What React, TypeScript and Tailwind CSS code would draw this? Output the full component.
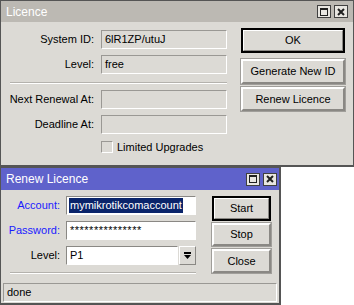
import React from 'react';

const font = { fontFamily: '"Liberation Sans", Arial, sans-serif' };

function TitleButtons() {
  return (
    <div className="flex gap-[3px]">
      <div className="w-[14px] h-[13px] border border-[#404040] bg-[#e8e6e1] flex items-center justify-center">
        <div className="w-[8px] h-[8px] border border-[#202020] border-t-2" />
      </div>
      <div className="w-[14px] h-[13px] border border-[#404040] bg-[#e8e6e1] flex items-center justify-center">
        <svg width="8" height="8" viewBox="0 0 8 8">
          <path d="M1 1L7 7M7 1L1 7" stroke="#202020" strokeWidth="2" />
        </svg>
      </div>
    </div>
  );
}

function Btn({ children, primary, className = '' }: { children: React.ReactNode; primary?: boolean; className?: string }) {
  return (
    <div
      className={`flex items-center justify-center text-black ${
        primary ? 'border-2 border-black' : 'border-2 border-t-white border-l-white border-r-[#8a8884] border-b-[#8a8884] outline outline-1 outline-[#a09e9a]'
      } ${className}`}
    >
      {primary ? (
        <div className="w-full h-full flex items-center justify-center border border-t-white border-l-white border-r-[#8a8884] border-b-[#8a8884]">
          {children}
        </div>
      ) : (
        children
      )}
    </div>
  );
}

function ReadField({ value }: { value?: string }) {
  return (
    <div className="w-[126px] h-[19px] border border-t-[#9a9894] border-l-[#9a9894] border-b-white border-r-white px-[3px] flex items-center text-black">
      {value}
    </div>
  );
}

function Row({ label, children }: { label: string; children: React.ReactNode }) {
  return (
    <div className="flex items-center">
      <div className="w-[100px] text-right pr-[7px] text-black">{label}</div>
      {children}
    </div>
  );
}

export default function App() {
  return (
    <div className="w-[354px] h-[305px] bg-white text-[11px] leading-none" style={font}>
      {/* Licence window */}
      <div className="w-[354px] h-[167px] bg-[#dcdad5] border border-[#555] border-b-2 flex flex-col">
        <div className="h-[21px] bg-[#bcb9b3] flex items-center justify-between pl-[5px] pr-[5px]">
          <span className="text-white text-[12px]">Licence</span>
          <TitleButtons />
        </div>
        <div className="flex flex-1">
          <div className="w-[240px] pt-[8px] flex flex-col">
            <Row label="System ID:">
              <ReadField value="6lR1ZP/utuJ" />
            </Row>
            <div className="mt-[6px]">
              <Row label="Level:">
                <ReadField value="free" />
              </Row>
            </div>
            <div className="ml-[9px] w-[217px] mt-[8px] h-[2px] border-t border-[#b4b2ad] border-b border-b-white" />
            <div className="mt-[6px]">
              <Row label="Next Renewal At:">
                <ReadField />
              </Row>
            </div>
            <div className="mt-[6px]">
              <Row label="Deadline At:">
                <ReadField />
              </Row>
            </div>
            <div className="mt-[7px] flex items-center pl-[100px]">
              <div className="w-[12px] h-[12px] border border-t-[#9a9894] border-l-[#9a9894] border-b-white border-r-white" />
              <span className="ml-[4px] text-black">Limited Upgrades</span>
            </div>
          </div>
          <div className="flex flex-col pt-[6px]">
            <Btn primary className="w-[104px] h-[25px]">OK</Btn>
            <Btn className="w-[104px] h-[25px] mt-[6px]">Generate New ID</Btn>
            <Btn className="w-[104px] h-[24px] mt-[3px]">Renew Licence</Btn>
          </div>
        </div>
      </div>

      {/* Renew Licence window */}
      <div className="w-[281px] h-[138px] bg-[#dcdad5] border border-[#555] border-r-2 border-b-2 flex flex-col">
        <div className="h-[22px] bg-[#5f62cb] flex items-center justify-between pl-[5px] pr-[2px]">
          <span className="text-white text-[12px]">Renew Licence</span>
          <TitleButtons />
        </div>
        <div className="flex">
          <div className="w-[210px] pt-[6px] flex flex-col">
            <div className="flex items-center">
              <div className="w-[65px] text-right pr-[6px] text-[#1a1aff]">Account:</div>
              <div className="w-[130px] h-[19px] bg-white border border-t-[#8a8884] border-l-[#8a8884] border-b-white border-r-white flex items-center pl-[2px]">
                <span className="bg-[#0a246a] text-white px-[1px] py-[2px]">mymikrotikcomaccount</span>
              </div>
            </div>
            <div className="flex items-center mt-[6px]">
              <div className="w-[65px] text-right pr-[6px] text-[#1a1aff]">Password:</div>
              <div className="w-[130px] h-[19px] bg-white border border-t-[#8a8884] border-l-[#8a8884] border-b-white border-r-white flex items-center pl-[3px] text-black tracking-[0.5px]">
                ***************
              </div>
            </div>
            <div className="flex items-center mt-[6px]">
              <div className="w-[65px] text-right pr-[6px] text-black">Level:</div>
              <div className="w-[112px] h-[19px] bg-white border border-t-[#8a8884] border-l-[#8a8884] border-b-white border-r-white flex items-center pl-[3px] text-black">
                P1
              </div>
              <div className="w-[17px] h-[19px] ml-[1px] border border-t-white border-l-white border-r-[#8a8884] border-b-[#8a8884] flex items-center justify-center">
                <svg width="7" height="8" viewBox="0 0 7 8">
                  <path d="M0 0h7v2H0z M0 3h7L3.5 7z" fill="#000" />
                </svg>
              </div>
            </div>
            <div className="ml-[9px] w-[186px] mt-[7px] h-[2px] border-t border-[#b4b2ad] border-b border-b-white" />
          </div>
          <div className="flex flex-col pt-[6px] pl-[1px]">
            <Btn primary className="w-[59px] h-[25px]">Start</Btn>
            <Btn className="w-[59px] h-[23px] mt-[2px]">Stop</Btn>
            <Btn className="w-[59px] h-[24px] mt-[3px]">Close</Btn>
          </div>
        </div>
        <div className="mx-[2px] mt-[9px] h-[19px] border border-t-[#9a9894] border-l-[#9a9894] border-b-white border-r-white flex items-center pl-[3px] text-black">
          done
        </div>
      </div>
    </div>
  );
}
